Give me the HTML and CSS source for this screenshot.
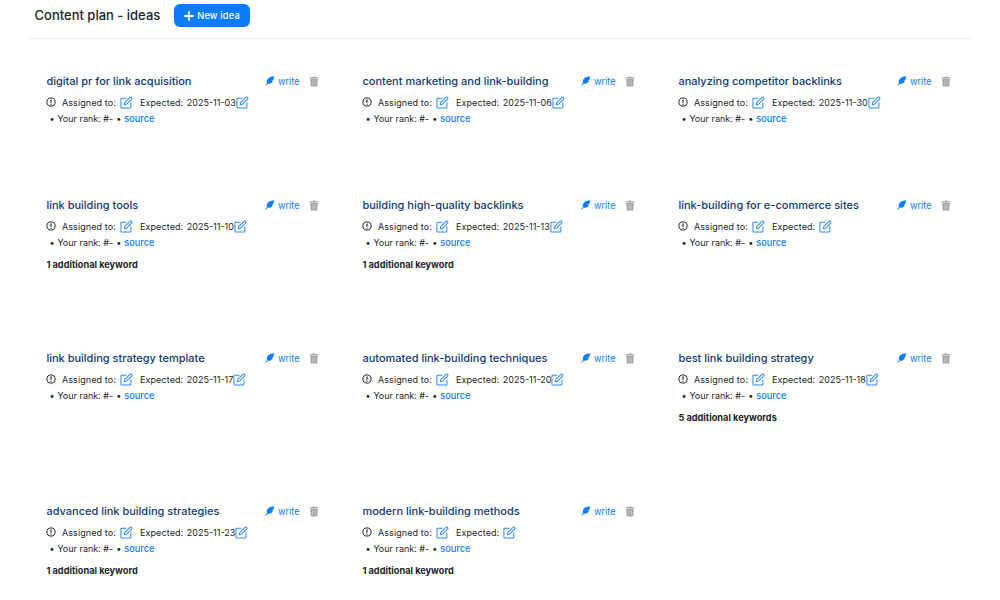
FILE: index.html
```html
<!DOCTYPE html>
<html lang="en">
<head>
<meta charset="utf-8">
<title>Content plan - ideas</title>
<link rel="stylesheet" href="styles.css">
</head>
<body>
<svg class="defs" width="0" height="0" aria-hidden="true">
  <symbol id="i-edit" viewBox="0 0 14 14">
    <path d="M7 2.300H1.900a.9.9 0 0 0-.9.9v8.900c0 .5.4.9.9.9h8.900c.5 0 .9-.4.9-.9V7" fill="none" stroke="currentColor" stroke-width="1.100"/>
    <path d="M4.600 9.400l.5-2.200L11 1.300c.3-.3.8-.3 1.100 0l.6.6c.3.3.3.8 0 1.100L6.800 8.900z" fill="none" stroke="currentColor" stroke-width="1.100" stroke-linejoin="round"/>
  </symbol>
  <symbol id="i-feather" viewBox="0 0 12 12">
    <path d="M11.800.3C8 .5 4.300 1.500 2.800 4.100 2 5.600 2 7.200 2.600 8.200L.3 11l.7.7 2.400-2.600c1.300.5 3.100.4 4.500-.9.700-.7 1.200-1.500 1.500-2.300l-2 .1 2.400-1c.6-1.500.9-3 1.500-4.700z" fill="currentColor"/>
  </symbol>
  <symbol id="i-trash" viewBox="0 0 10 11">
    <path d="M.6 1.300h2.800l.4-.9h2.400l.4.9h2.800v1.200H.6z M1.300 3.100h7.400l-.5 7.500H1.800z" fill="currentColor"/>
    <path d="M3.500 4.200v5.200M5 4.200v5.200M6.500 4.200v5.200" stroke="#fff" stroke-width=".5" opacity=".6"/>
  </symbol>
  <symbol id="i-info" viewBox="0 0 10 10">
    <circle cx="5" cy="5" r="4.100" fill="none" stroke="currentColor" stroke-width="1"/>
    <path d="M5 2.400v3.300M5 6.700v1" stroke="currentColor" stroke-width="1.200"/>
  </symbol>
</svg>
<header class="page-head">
  <h1 class="page-title">Content plan - ideas</h1>
  <button class="new-idea" type="button"><svg class="plus" viewBox="0 0 10 10"><path d="M5 .3v9.400M.3 5h9.400" stroke="currentColor" stroke-width="1.800"/></svg>New idea</button>
</header>
<main class="ideas">
  <article class="idea">
    <div class="idea-top"><h2 class="idea-title">digital pr for link acquisition</h2><div class="idea-actions"><a class="write"><svg class="ic-feather"><use href="#i-feather"></use></svg>write</a><svg class="ic-trash"><use href="#i-trash"></use></svg></div></div>
    <div class="meta"><svg class="ic-info"><use href="#i-info"></use></svg><span class="assigned">Assigned to:</span><svg class="ic-edit"><use href="#i-edit"></use></svg><span class="expected">Expected:</span><span class="date">2025-11-03</span><svg class="ic-edit"><use href="#i-edit"></use></svg></div>
    <div class="rank"><span class="dot">•</span>Your rank: #- <span class="dot dot2">•</span><a class="source">source</a></div>
  </article>
  <article class="idea">
    <div class="idea-top"><h2 class="idea-title">content marketing and link-building</h2><div class="idea-actions"><a class="write"><svg class="ic-feather"><use href="#i-feather"></use></svg>write</a><svg class="ic-trash"><use href="#i-trash"></use></svg></div></div>
    <div class="meta"><svg class="ic-info"><use href="#i-info"></use></svg><span class="assigned">Assigned to:</span><svg class="ic-edit"><use href="#i-edit"></use></svg><span class="expected">Expected:</span><span class="date">2025-11-06</span><svg class="ic-edit"><use href="#i-edit"></use></svg></div>
    <div class="rank"><span class="dot">•</span>Your rank: #- <span class="dot dot2">•</span><a class="source">source</a></div>
  </article>
  <article class="idea">
    <div class="idea-top"><h2 class="idea-title">analyzing competitor backlinks</h2><div class="idea-actions"><a class="write"><svg class="ic-feather"><use href="#i-feather"></use></svg>write</a><svg class="ic-trash"><use href="#i-trash"></use></svg></div></div>
    <div class="meta"><svg class="ic-info"><use href="#i-info"></use></svg><span class="assigned">Assigned to:</span><svg class="ic-edit"><use href="#i-edit"></use></svg><span class="expected">Expected:</span><span class="date">2025-11-30</span><svg class="ic-edit"><use href="#i-edit"></use></svg></div>
    <div class="rank"><span class="dot">•</span>Your rank: #- <span class="dot dot2">•</span><a class="source">source</a></div>
  </article>
  <article class="idea">
    <div class="idea-top"><h2 class="idea-title">link building tools</h2><div class="idea-actions"><a class="write"><svg class="ic-feather"><use href="#i-feather"></use></svg>write</a><svg class="ic-trash"><use href="#i-trash"></use></svg></div></div>
    <div class="meta"><svg class="ic-info"><use href="#i-info"></use></svg><span class="assigned">Assigned to:</span><svg class="ic-edit"><use href="#i-edit"></use></svg><span class="expected">Expected:</span><span class="date">2025-11-10</span><svg class="ic-edit"><use href="#i-edit"></use></svg></div>
    <div class="rank"><span class="dot">•</span>Your rank: #- <span class="dot dot2">•</span><a class="source">source</a></div>
    <div class="extra">1 additional keyword</div>
  </article>
  <article class="idea">
    <div class="idea-top"><h2 class="idea-title">building high-quality backlinks</h2><div class="idea-actions"><a class="write"><svg class="ic-feather"><use href="#i-feather"></use></svg>write</a><svg class="ic-trash"><use href="#i-trash"></use></svg></div></div>
    <div class="meta"><svg class="ic-info"><use href="#i-info"></use></svg><span class="assigned">Assigned to:</span><svg class="ic-edit"><use href="#i-edit"></use></svg><span class="expected">Expected:</span><span class="date">2025-11-13</span><svg class="ic-edit"><use href="#i-edit"></use></svg></div>
    <div class="rank"><span class="dot">•</span>Your rank: #- <span class="dot dot2">•</span><a class="source">source</a></div>
    <div class="extra">1 additional keyword</div>
  </article>
  <article class="idea">
    <div class="idea-top"><h2 class="idea-title">link-building for e-commerce sites</h2><div class="idea-actions"><a class="write"><svg class="ic-feather"><use href="#i-feather"></use></svg>write</a><svg class="ic-trash"><use href="#i-trash"></use></svg></div></div>
    <div class="meta"><svg class="ic-info"><use href="#i-info"></use></svg><span class="assigned">Assigned to:</span><svg class="ic-edit"><use href="#i-edit"></use></svg><span class="expected">Expected:</span><span class="date"></span><svg class="ic-edit"><use href="#i-edit"></use></svg></div>
    <div class="rank"><span class="dot">•</span>Your rank: #- <span class="dot dot2">•</span><a class="source">source</a></div>
  </article>
  <article class="idea">
    <div class="idea-top"><h2 class="idea-title">link building strategy template</h2><div class="idea-actions"><a class="write"><svg class="ic-feather"><use href="#i-feather"></use></svg>write</a><svg class="ic-trash"><use href="#i-trash"></use></svg></div></div>
    <div class="meta"><svg class="ic-info"><use href="#i-info"></use></svg><span class="assigned">Assigned to:</span><svg class="ic-edit"><use href="#i-edit"></use></svg><span class="expected">Expected:</span><span class="date">2025-11-17</span><svg class="ic-edit"><use href="#i-edit"></use></svg></div>
    <div class="rank"><span class="dot">•</span>Your rank: #- <span class="dot dot2">•</span><a class="source">source</a></div>
  </article>
  <article class="idea">
    <div class="idea-top"><h2 class="idea-title">automated link-building techniques</h2><div class="idea-actions"><a class="write"><svg class="ic-feather"><use href="#i-feather"></use></svg>write</a><svg class="ic-trash"><use href="#i-trash"></use></svg></div></div>
    <div class="meta"><svg class="ic-info"><use href="#i-info"></use></svg><span class="assigned">Assigned to:</span><svg class="ic-edit"><use href="#i-edit"></use></svg><span class="expected">Expected:</span><span class="date">2025-11-20</span><svg class="ic-edit"><use href="#i-edit"></use></svg></div>
    <div class="rank"><span class="dot">•</span>Your rank: #- <span class="dot dot2">•</span><a class="source">source</a></div>
  </article>
  <article class="idea">
    <div class="idea-top"><h2 class="idea-title">best link building strategy</h2><div class="idea-actions"><a class="write"><svg class="ic-feather"><use href="#i-feather"></use></svg>write</a><svg class="ic-trash"><use href="#i-trash"></use></svg></div></div>
    <div class="meta"><svg class="ic-info"><use href="#i-info"></use></svg><span class="assigned">Assigned to:</span><svg class="ic-edit"><use href="#i-edit"></use></svg><span class="expected">Expected:</span><span class="date">2025-11-18</span><svg class="ic-edit"><use href="#i-edit"></use></svg></div>
    <div class="rank"><span class="dot">•</span>Your rank: #- <span class="dot dot2">•</span><a class="source">source</a></div>
    <div class="extra">5 additional keywords</div>
  </article>
  <article class="idea">
    <div class="idea-top"><h2 class="idea-title">advanced link building strategies</h2><div class="idea-actions"><a class="write"><svg class="ic-feather"><use href="#i-feather"></use></svg>write</a><svg class="ic-trash"><use href="#i-trash"></use></svg></div></div>
    <div class="meta"><svg class="ic-info"><use href="#i-info"></use></svg><span class="assigned">Assigned to:</span><svg class="ic-edit"><use href="#i-edit"></use></svg><span class="expected">Expected:</span><span class="date">2025-11-23</span><svg class="ic-edit"><use href="#i-edit"></use></svg></div>
    <div class="rank"><span class="dot">•</span>Your rank: #- <span class="dot dot2">•</span><a class="source">source</a></div>
    <div class="extra">1 additional keyword</div>
  </article>
  <article class="idea">
    <div class="idea-top"><h2 class="idea-title">modern link-building methods</h2><div class="idea-actions"><a class="write"><svg class="ic-feather"><use href="#i-feather"></use></svg>write</a><svg class="ic-trash"><use href="#i-trash"></use></svg></div></div>
    <div class="meta"><svg class="ic-info"><use href="#i-info"></use></svg><span class="assigned">Assigned to:</span><svg class="ic-edit"><use href="#i-edit"></use></svg><span class="expected">Expected:</span><span class="date"></span><svg class="ic-edit"><use href="#i-edit"></use></svg></div>
    <div class="rank"><span class="dot">•</span>Your rank: #- <span class="dot dot2">•</span><a class="source">source</a></div>
    <div class="extra">1 additional keyword</div>
  </article>
</main>
</body>
</html>
```
FILE: styles.css
```css
* { box-sizing: border-box; }
html, body { margin: 0; height: 100%; }
body {
  background: #fff;
  color: #1f2328;
  font-family: Inter, "Liberation Sans", sans-serif;
  overflow: hidden;
}
.defs { position: absolute; }
.page-head {
  margin: 0 28px;
  height: 39px;
  padding: 4px 0 0 6.500px;
  border-bottom: 1px solid #e9ecef;
  display: flex;
  align-items: flex-start;
  gap: 13.500px;
}
.page-title {
  margin: 0;
  font-size: 13px;
  line-height: 22px;
  font-weight: 500;
  color: #212529;
}
.new-idea {
  height: 23px;
  width: 76.500px;
  padding: 0;
  border: 0;
  border-radius: 6px;
  background: #0a7cff;
  color: #fff;
  font: 500 9.200px Inter, sans-serif;
  letter-spacing: .2px;
  display: flex;
  align-items: center;
  justify-content: center;
  gap: 3px;
}
.plus { width: 10px; height: 10px; flex: none; }
.ideas {
  margin-left: 46.400px;
  padding-top: 35px;
  display: grid;
  grid-template-columns: repeat(3, 316px);
  grid-template-rows: 124px 153px 153px 90px;
}
.idea { padding-right: 36px; }
.idea-top {
  display: flex;
  justify-content: space-between;
  align-items: center;
  height: 14px;
}
.idea-title {
  margin: 0;
  font-size: 11px;
  line-height: 14px;
  font-weight: 500;
  color: #0f3c73;
}
.idea-actions { display: flex; align-items: center; width: 63px; gap: 9px; flex: none; margin-right: -2px; }
.write {
  display: flex;
  align-items: center;
  gap: 2.500px;
  font-size: 9.200px;
  color: #0a7cff;
}
.ic-feather { width: 10px; height: 10px; }
.ic-trash { width: 10px; height: 11px; color: #a3a3a3; }
.meta {
  margin-top: 7px;
  display: flex;
  align-items: center;
  height: 14px;
  font-size: 9px;
  color: #212529;
  letter-spacing: .1px;
}
.ic-info { width: 10px; height: 10px; color: #212529; flex: none; }
.assigned { margin-left: 5.500px; }
.ic-edit { width: 13px; height: 13px; color: #2f8af5; flex: none; }
.assigned + .ic-edit { margin-left: 4px; }
.expected { margin-left: 7px; }
.date { margin-left: 3.500px; letter-spacing: 0; }
.rank {
  margin-top: 3px;
  height: 14px;
  line-height: 14px;
  font-size: 9px;
  color: #212529;
  padding-left: 3px;
}
.dot { margin-right: 3px; }
.dot2 { margin-left: .5px; }
.source { color: #0a7cff; font-weight: 500; font-size: 9.200px; }
.extra {
  margin-top: 8px;
  font-size: 9.200px;
  line-height: 14px;
  font-weight: 700;
  color: #212529;
}
```
